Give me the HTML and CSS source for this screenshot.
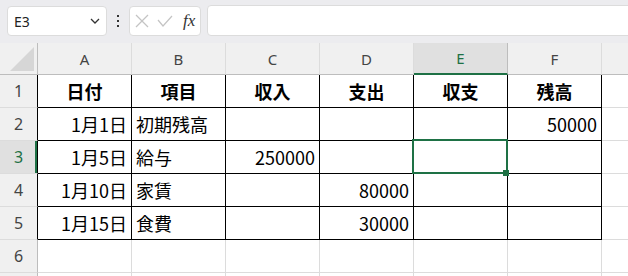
FILE: index.html
```html
<!DOCTYPE html>
<html lang="ja">
<head>
  <meta charset="UTF-8" />
  <title>家計簿</title>
  <link rel="stylesheet" href="styles.css">
</head>
<body>

  <div class="toolbar">
    <div class="name-box">
      <span>E3</span>
      <svg class="chevron" width="10" height="6" viewBox="0 0 10 6"><polyline points="1,1 5,5 9,1" /></svg>
    </div>
    <div class="dots"><i></i><i></i><i></i></div>
    <div class="fx-box">
      <svg class="fx-icon" width="14" height="14" viewBox="0 0 14 14"><line x1="1" y1="1" x2="13" y2="13" /><line x1="13" y1="1" x2="1" y2="13" /></svg>
      <svg class="fx-icon" width="16" height="12" viewBox="0 0 16 12"><polyline points="1,5 6,11 15,1" /></svg>
      <span class="fx">fx</span>
    </div>
    <div class="formula"></div>
  </div>

  <table class="sheet">
    <colgroup>
      <col class="rh-col">
      <col class="c-col"><col class="c-col"><col class="c-col"><col class="c-col">
      <col class="c-col"><col class="c-col"><col class="c-col">
    </colgroup>
    <tr class="head">
      <th class="corner"><div class="tri"></div></th>
      <th>A</th><th>B</th><th>C</th><th>D</th><th class="on">E</th><th>F</th><th></th>
    </tr>
    <tr>
      <th class="rh in">1</th>
      <td class="b c bold">日付</td><td class="b c bold">項目</td><td class="b c bold">収入</td>
      <td class="b c bold">支出</td><td class="b c bold">収支</td><td class="b c bold">残高</td><td></td>
    </tr>
    <tr>
      <th class="rh in">2</th>
      <td class="b r">1月1日</td><td class="b">初期残高</td><td class="b"></td>
      <td class="b"></td><td class="b"></td><td class="b r">50000</td><td></td>
    </tr>
    <tr>
      <th class="rh in on">3</th>
      <td class="b r">1月5日</td><td class="b">給与</td><td class="b r">250000</td>
      <td class="b"></td><td class="b sel"></td><td class="b"></td><td></td>
    </tr>
    <tr>
      <th class="rh in">4</th>
      <td class="b r">1月10日</td><td class="b">家賃</td><td class="b"></td>
      <td class="b r">80000</td><td class="b"></td><td class="b"></td><td></td>
    </tr>
    <tr>
      <th class="rh in">5</th>
      <td class="b r">1月15日</td><td class="b">食費</td><td class="b"></td>
      <td class="b r">30000</td><td class="b"></td><td class="b"></td><td></td>
    </tr>
    <tr>
      <th class="rh">6</th>
      <td></td><td></td><td></td><td></td><td></td><td></td><td></td>
    </tr>
    <tr>
      <th class="rh"></th>
      <td></td><td></td><td></td><td></td><td></td><td></td><td></td>
    </tr>
  </table>

</body>
</html>
```

FILE: styles.css
```css
body {
  margin: 0;
  width: 628px;
  height: 276px;
  overflow: hidden;
  background: #fff;
  font-family: 'Noto Sans', sans-serif;
}

/* formula bar */

.toolbar {
  display: flex;
  align-items: flex-start;
  height: 43px;
  box-sizing: border-box;
  padding-left: 7px;
  background: #ececef;
  overflow: hidden;
}

.toolbar > div {
  flex: none;
}

.name-box, .fx-box, .formula {
  background: #fff;
  border: 1px solid #dcdcdc;
  border-radius: 4px;
  box-sizing: border-box;
}

.name-box {
  width: 100px;
  height: 30px;
  margin-top: 6px;
  display: flex;
  align-items: center;
  justify-content: space-between;
  padding: 0 6px;
  font-size: 14px;
  color: #222;
}

.chevron polyline {
  fill: none;
  stroke: #333;
  stroke-width: 1.3;
}

.dots {
  width: 22px;
  margin-top: 15px;
  display: flex;
  flex-direction: column;
  align-items: center;
  gap: 3px;
}

.dots i {
  width: 2px;
  height: 2px;
  background: #333;
}

.fx-box {
  width: 72px;
  height: 30px;
  margin-top: 6px;
  display: flex;
  align-items: center;
  padding-left: 5px;
  gap: 8px;
}

.fx-icon line, .fx-icon polyline {
  fill: none;
  stroke: #c4c4c4;
  stroke-width: 1.2;
}

.fx {
  font-family: 'Liberation Serif', serif;
  font-style: italic;
  font-size: 17px;
  color: #333;
  margin-left: 2px;
}

.formula {
  width: 440px;
  height: 31px;
  margin-top: 5px;
  margin-left: 6px;
}

/* grid */

.sheet {
  table-layout: fixed;
  border-collapse: separate;
  border-spacing: 0;
  width: 696px;
  font-family: 'Noto Sans CJK JP', sans-serif;
  font-size: 18px;
  color: #000;
}

.rh-col { width: 38px; }
.c-col { width: 94px; }

.sheet th, .sheet td {
  box-sizing: border-box;
  height: 33px;
  padding: 0 4px;
  border-right: 1px solid #dcdcdc;
  border-bottom: 1px solid #dcdcdc;
  white-space: nowrap;
}

.head th {
  height: 32px;
  background: #f0f0f0;
  font-family: 'Noto Sans', sans-serif;
  font-weight: normal;
  font-size: 15px;
  color: #444;
  border-bottom-color: #bdbdbd;
}

.head th.on {
  background: #e0e0e0;
  color: #1e7145;
  border-bottom: 2px solid #1e7145;
  border-right-color: #bdbdbd;
}

.corner {
  position: relative;
  border-right-color: #bdbdbd !important;
}

.tri {
  position: absolute;
  right: 3px;
  bottom: 3px;
  width: 0;
  height: 0;
  border-left: 24px solid transparent;
  border-bottom: 24px solid #d6d6d6;
}

.rh {
  background: #f0f0f0;
  font-family: 'Noto Sans', sans-serif;
  font-weight: normal;
  font-size: 16px;
  color: #444;
  border-right-color: #bdbdbd !important;
}

.rh.in {
  border-right-color: #000 !important;
}

.rh.on {
  background: #e0e0e0;
  color: #1e7145;
  box-shadow: inset -2px 0 0 #1e7145;
}

.b {
  border-right-color: #000 !important;
  border-bottom-color: #000 !important;
}

.c { text-align: center; }
.r { text-align: right; }
.bold { font-weight: bold; }

.sel {
  position: relative;
}

.sel::before {
  content: "";
  position: absolute;
  left: -2px;
  top: -2px;
  right: -1px;
  bottom: -1px;
  border: 2px solid #1e7145;
}

.sel::after {
  content: "";
  position: absolute;
  right: -2px;
  bottom: -3px;
  width: 6px;
  height: 6px;
  background: #1e7145;
}
```
